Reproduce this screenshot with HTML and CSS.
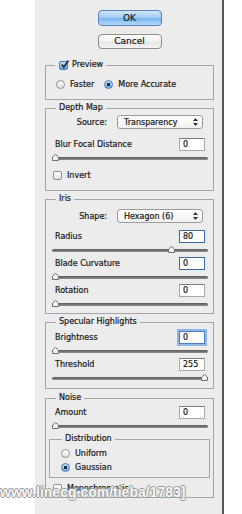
FILE: index.html
```html
<!DOCTYPE html>
<html lang="en">
<head>
    <meta charset="UTF-8">
    <meta name="viewport" content="width=device-width, initial-scale=1.0">
    <title>Lens Blur</title>
    <link rel="stylesheet" href="styles.css">
</head>
<body>
    <div class="panel">
        <div class="buttons">
            <button type="button" class="btn btn-default">OK</button>
            <button type="button" class="btn">Cancel</button>
        </div>

        <fieldset class="group group-preview">
            <legend><span class="check checked"><svg width="9" height="9" viewBox="0 0 9 9"><path d="M1.8 4.6 L3.8 7.2 L8.4 0.6" fill="none" stroke="#1c2c48" stroke-width="1.7"/></svg></span>Preview</legend>
            <div class="option-row">
                <span class="option"><span class="radio"></span>Faster</span>
                <span class="option"><span class="radio selected"></span>More Accurate</span>
            </div>
        </fieldset>

        <fieldset class="group group-depth">
            <legend>Depth Map</legend>
            <div class="select-row">
                <span class="select-label">Source:</span>
                <span class="popup">Transparency<svg width="5" height="8" viewBox="0 0 5 8"><path d="M2.5 0 L5 3 H0 Z M0 5 H5 L2.5 8 Z" fill="#333"/></svg></span>
            </div>
            <div class="field-row gap-top">
                <span>Blur Focal Distance</span>
                <span class="value">0</span>
            </div>
            <div class="slider"><div class="track"></div><svg class="thumb" style="--v: 0" width="7" height="7" viewBox="0 0 7 7"><path d="M0.5 6.5 V3 L3.5 0.5 L6.5 3 V6.5 Z" fill="#f4f4f4" stroke="#6e6e6e"/></svg></div>
            <div class="check-row invert">
                <span class="check"></span>Invert
            </div>
        </fieldset>

        <fieldset class="group group-iris">
            <legend>Iris</legend>
            <div class="select-row">
                <span class="select-label">Shape:</span>
                <span class="popup">Hexagon (6)<svg width="5" height="8" viewBox="0 0 5 8"><path d="M2.5 0 L5 3 H0 Z M0 5 H5 L2.5 8 Z" fill="#333"/></svg></span>
            </div>
            <div class="field-row gap-top">
                <span>Radius</span>
                <span class="value active">80</span>
            </div>
            <div class="slider"><div class="track"></div><svg class="thumb" style="--v: 0.78" width="7" height="7" viewBox="0 0 7 7"><path d="M0.5 6.5 V3 L3.5 0.5 L6.5 3 V6.5 Z" fill="#f4f4f4" stroke="#6e6e6e"/></svg></div>
            <div class="field-row">
                <span>Blade Curvature</span>
                <span class="value active">0</span>
            </div>
            <div class="slider"><div class="track"></div><svg class="thumb" style="--v: 0" width="7" height="7" viewBox="0 0 7 7"><path d="M0.5 6.5 V3 L3.5 0.5 L6.5 3 V6.5 Z" fill="#f4f4f4" stroke="#6e6e6e"/></svg></div>
            <div class="field-row">
                <span>Rotation</span>
                <span class="value">0</span>
            </div>
            <div class="slider"><div class="track"></div><svg class="thumb" style="--v: 0" width="7" height="7" viewBox="0 0 7 7"><path d="M0.5 6.5 V3 L3.5 0.5 L6.5 3 V6.5 Z" fill="#f4f4f4" stroke="#6e6e6e"/></svg></div>
        </fieldset>

        <fieldset class="group group-specular">
            <legend>Specular Highlights</legend>
            <div class="field-row">
                <span>Brightness</span>
                <span class="value focus">0</span>
            </div>
            <div class="slider"><div class="track"></div><svg class="thumb" style="--v: 0" width="7" height="7" viewBox="0 0 7 7"><path d="M0.5 6.5 V3 L3.5 0.5 L6.5 3 V6.5 Z" fill="#f4f4f4" stroke="#6e6e6e"/></svg></div>
            <div class="field-row">
                <span>Threshold</span>
                <span class="value">255</span>
            </div>
            <div class="slider"><div class="track"></div><svg class="thumb" style="--v: 1" width="7" height="7" viewBox="0 0 7 7"><path d="M0.5 6.5 V3 L3.5 0.5 L6.5 3 V6.5 Z" fill="#f4f4f4" stroke="#6e6e6e"/></svg></div>
        </fieldset>

        <fieldset class="group group-noise">
            <legend>Noise</legend>
            <div class="field-row">
                <span>Amount</span>
                <span class="value">0</span>
            </div>
            <div class="slider"><div class="track"></div><svg class="thumb" style="--v: 0" width="7" height="7" viewBox="0 0 7 7"><path d="M0.5 6.5 V3 L3.5 0.5 L6.5 3 V6.5 Z" fill="#f4f4f4" stroke="#6e6e6e"/></svg></div>

            <fieldset class="group group-distribution">
                <legend>Distribution</legend>
                <div class="option-row stacked">
                    <span class="option"><span class="radio"></span>Uniform</span>
                </div>
                <div class="option-row stacked">
                    <span class="option"><span class="radio selected"></span>Gaussian</span>
                </div>
            </fieldset>

            <div class="check-row mono">
                <span class="check"></span>Monochromatic
            </div>
        </fieldset>
    </div>

    <div class="watermark">www.linecg.com/tieba/1783]</div>
</body>
</html>
```

FILE: styles.css
```css
* {
    box-sizing: border-box;
}

body {
    margin: 0;
    background-color: #fff;
    font-family: "DejaVu Sans", sans-serif;
    font-size: 8px;
    color: #111;
}

.panel {
    margin-left: 35px;
    width: 189px;
    min-height: 514px;
    padding: 10px 8px 0 10px;
    background-color: #ececec;
    border-right: 2px solid #555;
    -webkit-text-stroke: 0.2px #222;
}

.buttons {
    display: flex;
    flex-direction: column;
    align-items: center;
    gap: 8px;
}

.btn {
    width: 64px;
    height: 15px;
    padding: 0;
    font-family: "DejaVu Sans", sans-serif;
    font-size: 9px;
    line-height: 13px;
    color: #111;
    border: 1px solid #8c8c8c;
    border-radius: 4px;
    background: linear-gradient(#ffffff, #f1f1f1 50%, #e4e4e4 51%, #f4f4f4);
}

.btn-default {
    height: 16px;
    border-color: #5b80b4;
    background: linear-gradient(#cfe5fb, #9fcaf3 50%, #78b3ee 51%, #b3daf9);
}

/* group boxes */

.group {
    margin: 0;
    padding: 0 3px;
    min-width: 0;
    border: 1px solid #a6a6a6;
}

.group legend {
    height: 10px;
    margin-left: 7px;
    padding: 0 3px;
    line-height: 10px;
}

.group-preview {
    margin-top: 11px;
    padding-top: 8px;
    padding-bottom: 9px;
}

.group-preview legend {
    display: flex;
    align-items: center;
    gap: 4px;
    padding-left: 4px;
    margin-left: 6px;
}

.group-depth {
    margin-top: 3px;
    padding-top: 2px;
    padding-bottom: 9px;
}

.group-iris {
    margin-top: 3px;
    padding-top: 5px;
    padding-bottom: 2px;
}

.group-specular {
    margin-top: 3px;
    padding-top: 4px;
    padding-bottom: 3px;
}

.group-noise {
    margin-top: 4px;
    padding-top: 3px;
    padding-bottom: 3px;
}

.group-distribution {
    margin-top: 3px;
    padding-top: 3px;
    padding-bottom: 4px;
}

.group-distribution legend {
    margin-left: 9px;
}

/* rows */

.option-row {
    display: flex;
    align-items: center;
    gap: 10px;
    height: 12px;
    padding-left: 7px;
}

.option-row.stacked {
    padding-left: 8px;
}

.option-row.stacked + .option-row.stacked {
    margin-top: 2px;
}

.option {
    display: flex;
    align-items: center;
    gap: 5px;
}

.check-row {
    display: flex;
    align-items: center;
    gap: 5px;
    height: 12px;
    padding-left: 4px;
}

.invert {
    margin-top: 6px;
}

.mono {
    margin-top: 4px;
}

.select-row {
    display: flex;
    align-items: center;
    height: 14px;
}

.select-label {
    width: 58px;
    text-align: right;
    margin-right: 10px;
}

.popup {
    display: flex;
    align-items: center;
    justify-content: space-between;
    width: 86px;
    height: 14px;
    padding: 0 4px 0 6px;
    background: linear-gradient(#ffffff, #f0f0f0);
    border: 1px solid #9c9c9c;
    border-radius: 3px;
}

.field-row {
    display: flex;
    align-items: center;
    justify-content: space-between;
    height: 13px;
    padding: 0 5px 0 6px;
}

.gap-top {
    margin-top: 7px;
}

.group-depth .gap-top {
    margin-top: 9px;
}

.value {
    width: 26px;
    height: 13px;
    padding-left: 3px;
    line-height: 11px;
    background-color: #fff;
    border: 1px solid #a8a8a8;
    border-top-color: #7c7c7c;
}

.value.active {
    border-color: #3c68a8;
}

.value.focus {
    border-color: #4b7cc2;
    box-shadow: 0 0 0 2px #8fb6ea;
}

/* sliders */

.slider {
    position: relative;
    height: 12px;
    padding-top: 6px;
    margin: 0 2px 2px 3px;
}

.track {
    height: 3px;
    border-radius: 2px;
    background: linear-gradient(#5a5a5a, #8e8e8e);
}

.thumb {
    position: absolute;
    top: 3px;
    left: calc(var(--v) * (100% - 7px));
}

/* check boxes and radios */

.check {
    display: inline-block;
    width: 9px;
    height: 9px;
    border: 1px solid #8e8e8e;
    border-radius: 2px;
    background: linear-gradient(#ffffff, #e2e2e2);
}

.check.checked {
    position: relative;
    border-color: #4f79b3;
    background: linear-gradient(#c4def8, #6fa6e6);
}

.check.checked svg {
    position: absolute;
    left: 0;
    top: -2px;
}

.radio {
    display: inline-block;
    width: 9px;
    height: 9px;
    border: 1px solid #8e8e8e;
    border-radius: 50%;
    background: linear-gradient(#ffffff, #e2e2e2);
}

.radio.selected {
    border-color: #4f79b3;
    background: radial-gradient(circle, #1c2b45 0 1.6px, transparent 2px), linear-gradient(#c4def8, #6fa6e6);
}

.watermark {
    position: absolute;
    left: 0;
    top: 484px;
    font-family: "Liberation Sans", sans-serif;
    font-weight: bold;
    font-size: 14px;
    line-height: 16px;
    color: #f6f6f6;
    text-shadow: 1px 0 0 #9a9a9a, -1px 0 0 #9a9a9a, 0 1px 0 #9a9a9a, 0 -1px 0 #9a9a9a;
}
```
